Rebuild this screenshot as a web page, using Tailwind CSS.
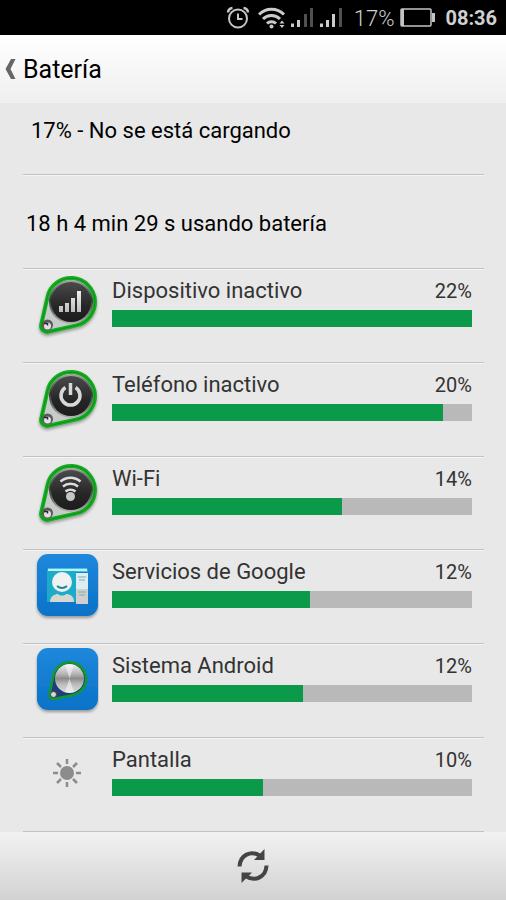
<!DOCTYPE html>
<html lang="es">
<head>
    <meta charset="UTF-8">
    <meta name="viewport" content="width=device-width, initial-scale=1.0">
    <title>Batería</title>
    <script src="https://cdn.jsdelivr.net/npm/@tailwindcss/browser@4"></script>
</head>
<body class="bg-[#e8e8e8] font-['Roboto','Noto_Sans',sans-serif]">
    <!-- Shared gradients and the keyring shape -->
    <svg class="absolute w-0 h-0" aria-hidden="true">
        <defs>
            <linearGradient id="dark" x1="0" y1="0" x2="0" y2="1">
                <stop offset="0" stop-color="#4a4a4c"/>
                <stop offset="0.6" stop-color="#262627"/>
                <stop offset="1" stop-color="#1c1c1c"/>
            </linearGradient>
            <linearGradient id="rim" x1="0" y1="0" x2="0" y2="1">
                <stop offset="0" stop-color="#a0aaa0"/>
                <stop offset="0.45" stop-color="#303630"/>
                <stop offset="1" stop-color="#b4b4b4"/>
            </linearGradient>
            <linearGradient id="glyph" x1="0" y1="0" x2="0" y2="1">
                <stop offset="0" stop-color="#f0f0f0"/>
                <stop offset="1" stop-color="#bcbcbc"/>
            </linearGradient>
            <linearGradient id="blue" x1="0" y1="0" x2="0" y2="1">
                <stop offset="0" stop-color="#1e88dc"/>
                <stop offset="1" stop-color="#0a72c8"/>
            </linearGradient>
            <linearGradient id="steel" x1="0" y1="0" x2="0" y2="1">
                <stop offset="0" stop-color="#f0f0f0"/>
                <stop offset="0.35" stop-color="#b4b4b4"/>
                <stop offset="0.5" stop-color="#8c8c8c"/>
                <stop offset="0.7" stop-color="#bcbcbc"/>
                <stop offset="1" stop-color="#dcdcdc"/>
            </linearGradient>
            <filter id="shadow" x="-20%" y="-20%" width="140%" height="150%">
                <feDropShadow dx="0" dy="2" stdDeviation="1.5" flood-color="#000" flood-opacity="0.35"/>
            </filter>
        </defs>
        <symbol id="ring" viewBox="0 0 64 66">
            <path d="M12.6 23.6A24 24 0 1 1 41.4 52.4L13.3 58.8A6 6 0 0 1 6.2 51.7Z" fill="#c8ccc8" stroke="#16ae22" stroke-width="4" filter="url(#shadow)"/>
            <path d="M12.6 23.6A24 24 0 1 1 41.4 52.4L13.3 58.8A6 6 0 0 1 6.2 51.7Z" fill="none" stroke="#0e9018" stroke-width="1"/>
            <circle cx="36" cy="29" r="22" fill="url(#rim)"/>
            <circle cx="36" cy="29" r="20" fill="url(#dark)"/>
            <circle cx="12.500" cy="52" r="5.500" fill="#5a5a5a"/>
            <circle cx="12.500" cy="53" r="3.500" fill="#e2e0e4"/>
            <path d="M9 50.500h3.500v2" fill="none" stroke="#2a2a2a" stroke-width="1.500"/>
        </symbol>
    </svg>

    <div class="min-h-screen flex flex-col">
        <!-- Status bar -->
        <div class="h-[35px] bg-black text-[#d0d0d0] flex items-center justify-end pr-[9px]">
            <svg class="w-6 h-6 mr-2" viewBox="0 0 24 24" fill="none" stroke="#c6c6c6" stroke-width="2">
                <circle cx="12" cy="12.500" r="9"/>
                <path d="M12 7.500V13h4.500"/>
                <path d="M2 6.500a5 5 0 0 1 4.500-4.500M22 6.500A5 5 0 0 0 17.500 2" stroke-width="2.500"/>
            </svg>
            <svg class="w-[28px] h-6 mr-[5px]" viewBox="0 0 28 24" fill="none" stroke="#cccccc" stroke-width="3">
                <path d="M1 8.500a17.500 17.500 0 0 1 25 0"/>
                <path d="M5 13a12 12 0 0 1 17 0"/>
                <path d="M9 17.500a6.500 6.500 0 0 1 9 0"/>
                <circle cx="13.500" cy="20.500" r="2" fill="#cccccc" stroke="none"/>
                <path d="M21.500 17.500l2.500-3 2.500 3zM21.500 19l2.500 3 2.500-3z" fill="#cccccc" stroke="none"/>
            </svg>
            <svg class="w-6 h-5 mr-[5px]" viewBox="0 0 24 20">
                <path d="M0 15.500h3V19H0zM6 12h3v7H6z" fill="#cccccc"/>
                <path d="M13 6h3v13h-3zM19 0h3v19h-3z" fill="#505050"/>
            </svg>
            <svg class="w-6 h-5 mr-[10px]" viewBox="0 0 24 20">
                <path d="M0 15.500h3V19H0zM6 12h3v7H6zM12 6h3v13h-3z" fill="#cccccc"/>
                <path d="M19 0h3v19h-3z" fill="#505050"/>
            </svg>
            <span class="text-[22px] font-light mr-[6px] pt-[2px]">17%</span>
            <svg class="w-[36px] h-5 mr-[9px]" viewBox="0 0 36 20">
                <rect x="1" y="1" width="30" height="17" rx="1" fill="none" stroke="#c4c4c4" stroke-width="1.500"/>
                <path d="M1 1h3v17H1zM32 5h3v9h-3z" fill="#c4c4c4"/>
            </svg>
            <span class="text-[20px] font-bold pt-px">08:36</span>
        </div>

        <!-- Title bar -->
        <header class="h-[68px] bg-linear-to-b from-white to-[#efefef] flex items-center">
            <button type="button" aria-label="Atrás" class="pl-[5px] pr-[7px] h-full">
                <svg class="w-[11px] h-5" viewBox="0 0 11 20">
                    <path d="M6 0h4.500L5.500 10l5 10H6L.5 10z" fill="#666666"/>
                </svg>
            </button>
            <h1 class="text-[25px] text-black pt-[2px]">Batería</h1>
        </header>

        <main class="flex-1 pl-[23px] pr-[22px] text-black">
            <p class="h-[71px] pt-[14px] pl-2 text-[22px] leading-7">17% - No se está cargando</p>
            <p class="h-[94px] pt-[35px] pl-[3px] border-t border-[#c2c2c2] shadow-[inset_0_1px_0_#f4f4f4] text-[22px] leading-7">18 h 4 min 29 s usando batería</p>

            <ul class="text-[#333333] border-b border-[#c2c2c2]">
                <li class="h-[94px] border-t border-[#c2c2c2] shadow-[inset_0_1px_0_#f4f4f4] flex pr-3">
                    <svg class="w-16 h-[66px] ml-3 mt-[4px] mr-[13px] shrink-0" viewBox="0 0 64 66">
                        <use href="#ring"/>
                        <path d="M24 33h4v6h-4zM30 30h4v9h-4zM36 25h4v14h-4zM42 18h4v21h-4z" fill="url(#glyph)"/>
                    </svg>
                    <div class="flex-1 pt-2">
                        <div class="flex justify-between leading-7">
                            <span class="text-[22px]">Dispositivo inactivo</span>
                            <span class="text-[20px]">22%</span>
                        </div>
                        <div class="h-[17px] mt-[5px] bg-[#b9b9b9]">
                            <div class="h-full bg-[#0b9a4a]" style="width: 100%"></div>
                        </div>
                    </div>
                </li>
                <li class="h-[94px] border-t border-[#c2c2c2] shadow-[inset_0_1px_0_#f4f4f4] flex pr-3">
                    <svg class="w-16 h-[66px] ml-3 mt-[4px] mr-[13px] shrink-0" viewBox="0 0 64 66">
                        <use href="#ring"/>
                        <path d="M30.500 20.500a9.500 9.500 0 1 0 10 0M35.500 16v12" fill="none" stroke="#d8d8d8" stroke-width="3.500"/>
                    </svg>
                    <div class="flex-1 pt-2">
                        <div class="flex justify-between leading-7">
                            <span class="text-[22px]">Teléfono inactivo</span>
                            <span class="text-[20px]">20%</span>
                        </div>
                        <div class="h-[17px] mt-[5px] bg-[#b9b9b9]">
                            <div class="h-full bg-[#0b9a4a]" style="width: 92%"></div>
                        </div>
                    </div>
                </li>
                <li class="h-[93px] border-t border-[#c2c2c2] shadow-[inset_0_1px_0_#f4f4f4] flex pr-3">
                    <svg class="w-16 h-[66px] ml-3 mt-[4px] mr-[13px] shrink-0" viewBox="0 0 64 66">
                        <use href="#ring"/>
                        <path d="M25.500 20.500a15 15 0 0 1 20 0M28 25.500a11.500 11.500 0 0 1 15 0M30.500 30.500a8 8 0 0 1 10 0" fill="none" stroke="#dedede" stroke-width="2.500"/>
                        <circle cx="35.500" cy="35.500" r="4.500" fill="#c6c6c6"/>
                    </svg>
                    <div class="flex-1 pt-2">
                        <div class="flex justify-between leading-7">
                            <span class="text-[22px]">Wi-Fi</span>
                            <span class="text-[20px]">14%</span>
                        </div>
                        <div class="h-[17px] mt-[5px] bg-[#b9b9b9]">
                            <div class="h-full bg-[#0b9a4a]" style="width: 64%"></div>
                        </div>
                    </div>
                </li>
                <li class="h-[94px] border-t border-[#c2c2c2] shadow-[inset_0_1px_0_#f4f4f4] flex pr-3">
                    <svg class="w-16 h-[66px] ml-3 mt-[4px] mr-[13px] shrink-0" viewBox="0 0 64 66">
                        <rect x="2" y="0" width="61" height="62" rx="11" fill="url(#blue)" filter="url(#shadow)"/>
                        <path d="M13 14h39l1 4H12z" fill="#3cc4e8"/>
                        <path d="M12 17h29v31H12z" fill="#1cabc8"/>
                        <path d="M13 15h39v2H13z" fill="#c4f0f4"/>
                        <path d="M41 19h12v31H41z" fill="#dceef2"/>
                        <path d="M41 35h12v15H41z" fill="#cfcfcf"/>
                        <path d="M43 23h8M44 26h6M43 38h8M44 41h6" stroke="#86aab0" stroke-width="1"/>
                        <circle cx="27" cy="28" r="10" fill="#eef2f2"/>
                        <path d="M22 32q5 4 10 0" fill="none" stroke="#17859b" stroke-width="2"/>
                        <path d="M15 48c0-6 5-8 8-8 2 2 6 2 8 0 4 0 8 2 8 8z" fill="#d6d6d2"/>
                    </svg>
                    <div class="flex-1 pt-2">
                        <div class="flex justify-between leading-7">
                            <span class="text-[22px]">Servicios de Google</span>
                            <span class="text-[20px]">12%</span>
                        </div>
                        <div class="h-[17px] mt-[5px] bg-[#b9b9b9]">
                            <div class="h-full bg-[#0b9a4a]" style="width: 55%"></div>
                        </div>
                    </div>
                </li>
                <li class="h-[94px] border-t border-[#c2c2c2] shadow-[inset_0_1px_0_#f4f4f4] flex pr-3">
                    <svg class="w-16 h-[66px] ml-3 mt-[4px] mr-[13px] shrink-0" viewBox="0 0 64 66">
                        <rect x="2" y="0" width="61" height="62" rx="11" fill="url(#blue)" filter="url(#shadow)"/>
                        <path d="M18.500 27A16.500 16.500 0 1 1 38 47L19 51A4 4 0 0 1 14.500 46Z" fill="#1d3f78" stroke="#0f9a2c" stroke-width="2.500"/>
                        <circle cx="34.500" cy="30.500" r="14.500" fill="url(#steel)"/>
                        <path d="M34.500 30.500L30 17a14 14 0 0 1 9 0zM34.500 30.500L30 44a14 14 0 0 0 9 0z" fill="#ffffff" fill-opacity="0.5"/>
                        <circle cx="18.500" cy="46.500" r="3" fill="#d8d8d8" stroke="#444444" stroke-width="1"/>
                    </svg>
                    <div class="flex-1 pt-2">
                        <div class="flex justify-between leading-7">
                            <span class="text-[22px]">Sistema Android</span>
                            <span class="text-[20px]">12%</span>
                        </div>
                        <div class="h-[17px] mt-[5px] bg-[#b9b9b9]">
                            <div class="h-full bg-[#0b9a4a]" style="width: 53%"></div>
                        </div>
                    </div>
                </li>
                <li class="h-[94px] border-t border-[#c2c2c2] shadow-[inset_0_1px_0_#f4f4f4] flex pr-3">
                    <svg class="w-16 h-[66px] ml-3 mt-[4px] mr-[13px] shrink-0" viewBox="0 0 64 66">
                        <circle cx="32" cy="31" r="7" fill="#8c8c8c"/>
                        <path d="M32 17v5M32 40v5M18 31h5M41 31h5M22 21l4 4M38 37l4 4M42 21l-4 4M26 37l-4 4" stroke="#8c8c8c" stroke-width="2.500"/>
                    </svg>
                    <div class="flex-1 pt-2">
                        <div class="flex justify-between leading-7">
                            <span class="text-[22px]">Pantalla</span>
                            <span class="text-[20px]">10%</span>
                        </div>
                        <div class="h-[17px] mt-[5px] bg-[#b9b9b9]">
                            <div class="h-full bg-[#0b9a4a]" style="width: 42%"></div>
                        </div>
                    </div>
                </li>
            </ul>
        </main>

        <!-- Bottom bar -->
        <footer class="h-[68px] bg-linear-to-b from-[#f2f2f2] to-[#d2d2d2] flex items-center justify-center">
            <button type="button" aria-label="Actualizar">
                <svg class="w-8 h-[34px]" viewBox="0 0 32 34">
                    <path d="M2.500 17.500C3 6 14 1 22.500 6.500" fill="none" stroke="#444444" stroke-width="4"/>
                    <path d="M27.500 0v11H17z" fill="#444444"/>
                    <path d="M29.500 16.500C29 28 18 33 9.500 27.500" fill="none" stroke="#444444" stroke-width="4"/>
                    <path d="M4.500 34V23.500H15z" fill="#444444"/>
                </svg>
            </button>
        </footer>
    </div>
</body>
</html>
